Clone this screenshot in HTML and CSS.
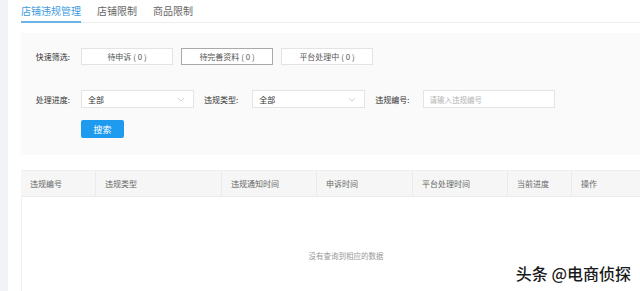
FILE: index.html
```html
<!DOCTYPE html>
<html lang="zh">
<head>
<meta charset="utf-8">
<link rel="stylesheet" href="styles.css">
</head>
<body>
<div class="page">
  <div class="strip"></div>
  <div class="main">
    <div class="tabs">
      <div class="tab active">店铺违规管理</div>
      <div class="tab">店铺限制</div>
      <div class="tab">商品限制</div>
    </div>
    <div class="filters">
      <div class="row quick">
        <div class="label">快速筛选:</div>
        <div class="qbtn">待申诉 ( 0 )</div>
        <div class="qbtn on">待完善资料 ( 0 )</div>
        <div class="qbtn">平台处理中 ( 0 )</div>
      </div>
      <div class="row fields">
        <div class="label">处理进度:</div>
        <div class="select"><span>全部</span><svg class="chev" viewBox="0 0 10 6" width="8" height="5"><path d="M1 1 L5 5 L9 1" fill="none" stroke="#c0c4cc" stroke-width="1"/></svg></div>
        <div class="label2">违规类型:</div>
        <div class="select"><span>全部</span><svg class="chev" viewBox="0 0 10 6" width="8" height="5"><path d="M1 1 L5 5 L9 1" fill="none" stroke="#c0c4cc" stroke-width="1"/></svg></div>
        <div class="label2">违规编号:</div>
        <div class="input">请输入违规编号</div>
      </div>
      <div class="row search">
        <div class="sbtn">搜索</div>
      </div>
    </div>
    <div class="table">
      <div class="thead">
        <div class="th c1">违规编号</div>
        <div class="th c2">违规类型</div>
        <div class="th c3">违规通知时间</div>
        <div class="th c4">申诉时间</div>
        <div class="th c5">平台处理时间</div>
        <div class="th c6">当前进度</div>
        <div class="th c7">操作</div>
      </div>
      <div class="tbody">
        <div class="empty">没有查询到相应的数据</div>
      </div>
    </div>
  </div>
</div>
<div class="watermark">头条 @电商侦探</div>
</body>
</html>
```
FILE: styles.css
```css
* { box-sizing: border-box; }
html, body { margin: 0; padding: 0; }
body {
  width: 640px;
  height: 291px;
  overflow: hidden;
  background: #fff;
  font-family: "Noto Sans CJK SC", "Noto Sans", sans-serif;
  color: #555;
  position: relative;
}
.page { display: flex; height: 291px; }
.strip { width: 8px; background: #f2f3f6; flex: none; }
.main { flex: 1; padding-left: 13px; display: flex; flex-direction: column; }

.tabs {
  display: flex;
  height: 23px;
  border-bottom: 1px solid #eeeeee;
  gap: 16px;
}
.tab {
  font-size: 10px;
  line-height: 21px;
  color: #666;
  height: 23px;
}
.tab.active {
  color: #3d9be0;
  border-bottom: 2px solid #6fb3e6;
  margin-bottom: -1px;
}

.filters {
  margin-top: 10px;
  background: #fafafa;
  height: 122px;
  padding-top: 15px;
}
.row { display: flex; align-items: center; }
.label {
  width: 49px;
  text-align: right;
  font-size: 8px;
  color: #333;
  margin-right: 11px;
}
.quick { height: 17px; gap: 8px; }
.quick .label { margin-right: 3px; }
.qbtn {
  width: 92px;
  height: 17px;
  border: 1px solid #e3e3e3;
  background: #fff;
  font-size: 8px;
  color: #555;
  display: flex;
  align-items: center;
  justify-content: center;
}
.qbtn.on { border-color: #a9a9a9; }

.fields { margin-top: 25px; height: 18px; }
.select {
  width: 113px;
  height: 18px;
  border: 1px solid #e4e4e4;
  background: #fff;
  display: flex;
  align-items: center;
  justify-content: space-between;
  padding: 0 8px 0 6px;
  font-size: 8px;
  color: #333;
}
.chev { display: block; }
.label2 {
  font-size: 8px;
  color: #333;
  margin: 0 14px 0 10px;
}
.input {
  width: 132px;
  height: 18px;
  border: 1px solid #e4e4e4;
  background: #fff;
  font-size: 7.5px;
  color: #b5b5b5;
  display: flex;
  align-items: center;
  padding-left: 5px;
}
.search { margin-top: 12px; padding-left: 60px; }
.sbtn {
  width: 43px;
  height: 18px;
  background: #1e9bef;
  border-radius: 2px;
  color: #fff;
  font-size: 9px;
  display: flex;
  align-items: center;
  justify-content: center;
}

.table { margin-top: 15px; flex: 1; display: flex; flex-direction: column; }
.thead {
  display: flex;
  height: 27px;
  background: #f6f6f6;
  border-top: 1px solid #efefef;
  border-bottom: 1px solid #ececec;
}
.th {
  font-size: 8px;
  color: #666;
  padding-left: 9px;
  display: flex;
  align-items: center;
  border-right: 1px solid #ebebeb;
}
.c1 { width: 75px; }
.c2 { width: 126px; }
.c3 { width: 95px; }
.c4 { width: 96px; }
.c5 { width: 95px; }
.c6 { width: 64px; }
.c7 { flex: 1; border-right: none; }
.tbody {
  flex: 1;
  border-left: 1px solid #f0f0f0;
  display: flex;
  justify-content: center;
  padding-top: 53px;
  padding-left: 30px;
}
.empty { font-size: 7.5px; color: #999; }

.watermark {
  position: absolute;
  right: 9px;
  top: 261px;
  font-size: 16px;
  font-weight: 500;
  color: #1a1a1a;
  text-shadow: 0 0 2px #fff, 0 0 2px #fff;
  font-family: "Noto Sans CJK SC", sans-serif;
}
```
